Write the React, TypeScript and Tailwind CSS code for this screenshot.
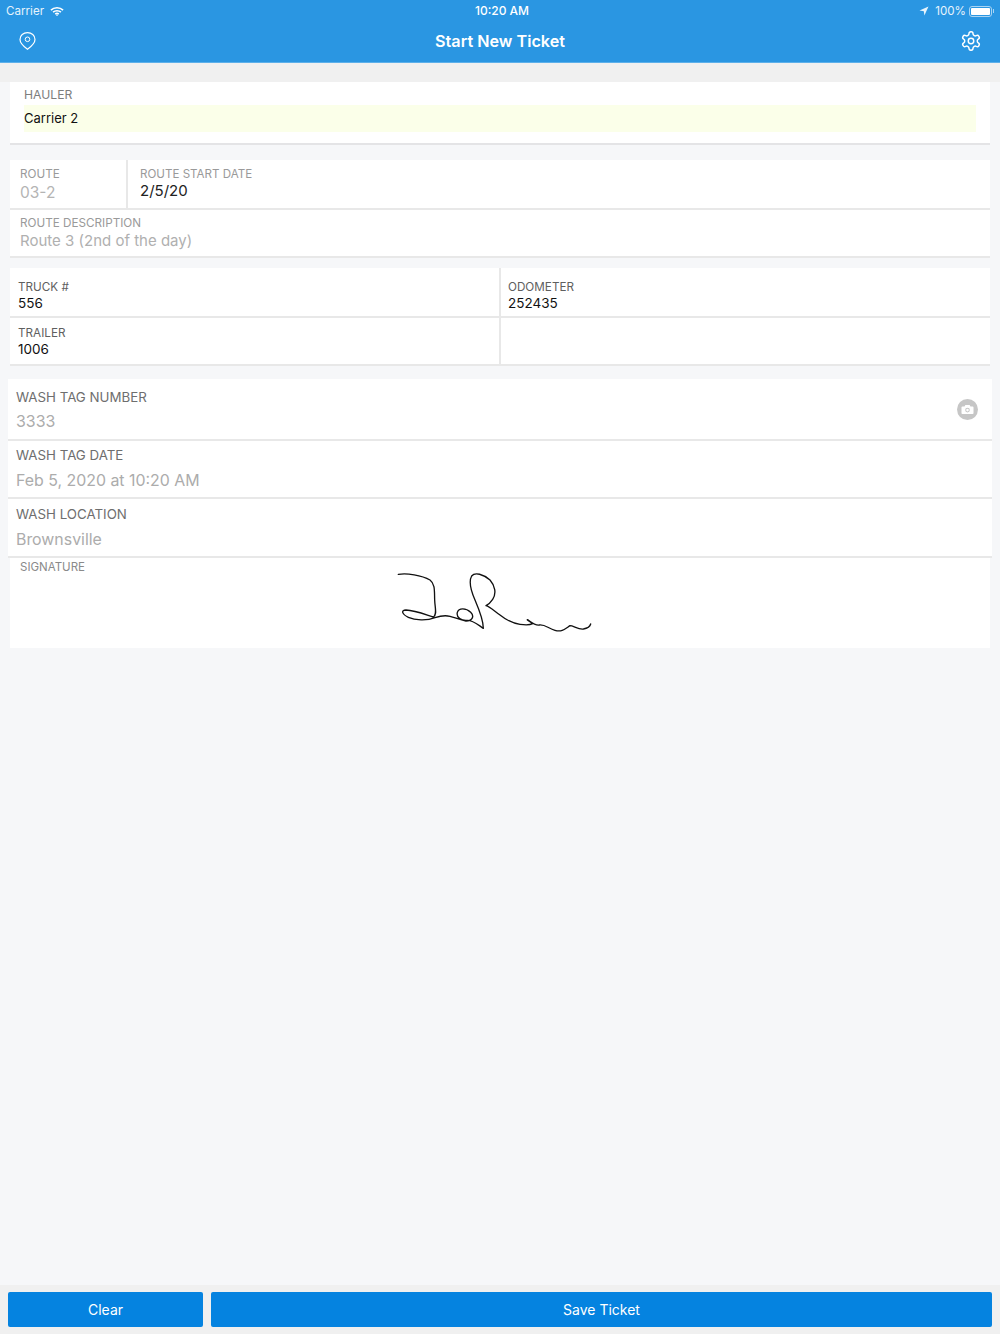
import React from "react";

const font = { fontFamily: "Inter, 'Liberation Sans', sans-serif" };

function Wifi() {
  return (
    <svg width="14" height="11" viewBox="0 0 15 11" fill="none" stroke="#fff" strokeWidth="1.7">
      <path d="M1 4 C4.5 .6 10.5 .6 14 4" />
      <path d="M3.3 6.2 C5.6 4.1 9.4 4.1 11.7 6.2" />
      <path d="M5.6 8.3 C6.7 7.4 8.3 7.4 9.4 8.3" />
      <circle cx="7.5" cy="9.6" r="0.8" fill="#fff" stroke="none" />
    </svg>
  );
}

function Signature() {
  return (
    <svg width="230" height="100" viewBox="0 0 690 300" fill="none" stroke="#111" strokeWidth="4" strokeLinecap="round" strokeLinejoin="round" className="absolute left-[370px] top-[-3px]">
      <path d="M55 58 C80 54 125 60 150 75 C166 87 163 110 164 135 C165 160 172 178 160 186 C140 180 105 166 78 165 C62 166 66 178 85 187 C105 196 140 198 165 188 C180 183 195 180 210 184 C225 188 240 194 258 198 C275 198 285 185 272 172 C258 158 236 158 232 172 C228 188 245 198 262 196 C280 196 292 208 310 220 C310 200 300 170 285 135 C272 105 265 80 275 63 C285 50 310 58 330 75 C345 92 350 115 338 133 C330 145 322 150 318 152 C330 155 345 170 360 180 C375 192 395 205 420 208 C435 210 450 210 458 206 C450 200 440 194 442 194 C450 198 462 212 478 210 C495 208 505 220 525 226 C545 232 555 222 570 212 C580 212 595 224 610 222 C622 220 630 215 632 207" />
    </svg>
  );
}

function Label({ children, className }: { children: React.ReactNode; className: string }) {
  return <div className={className}>{children}</div>;
}

function WashRow({ label, value, box, gap }: { label: string; value: string; box: string; gap: string }) {
  return (
    <div className={`bg-white border-b-2 border-[#e8e8e8] pl-2 ${box}`}>
      <div className="text-[13.3px] leading-[18px] text-[#6e6e6e]">{label}</div>
      <div className={`text-[15.9px] leading-[22px] text-[#acacac] ${gap}`}>{value}</div>
    </div>
  );
}

export default function App() {
  return (
    <div style={font} className="w-[1000px] h-[1334px] bg-[#f6f7f9] flex flex-col overflow-hidden">
      <header className="h-[63px] shrink-0 bg-[#2a96e2] border-b border-[#5db0ea] text-white flex flex-col">
        <div className="h-[21px] pt-[1px] flex items-center justify-between pl-[6px] pr-[6px] text-[11.6px]">
          <div className="flex items-center gap-[6px] w-[300px] pt-[1px]">
            <span className="text-[#e6f3fc]">Carrier</span>
            <Wifi />
          </div>
          <span className="text-[12px] font-medium pl-[4px]">10:20 AM</span>
          <div className="flex items-center justify-end gap-[5px] w-[300px] pt-[1px]">
            <svg width="10" height="10" viewBox="0 0 10 10" fill="#e6f3fc" className="mr-[1px]"><path d="M9.5 .5 L.5 4.6 L4.8 5.2 L5.4 9.5 Z" /></svg>
            <span className="text-[#e6f3fc] mr-[-2px]">100%</span>
            <div className="flex items-center gap-[1px]">
              <div className="w-[23px] h-[11px] rounded-[3px] border border-[#a9d4f3] p-[1px]">
                <div className="w-full h-full bg-white rounded-[1px]" />
              </div>
              <div className="w-[1px] h-[4px] bg-[#a9d4f3]" />
            </div>
          </div>
        </div>
        <div className="flex-1 flex items-center justify-between pl-[19px] pr-[18px] pb-[1px]">
          <svg width="17" height="18" viewBox="0 0 17 18" fill="none" stroke="#fff" strokeWidth="1.2" className="mr-[4px]">
            <path d="M8.5 17.2 C5 14.6 1 11.2 1 7.4 C1 3.4 4.4 .7 8.5 .7 C12.6 .7 16 3.4 16 7.4 C16 11.2 12 14.6 8.5 17.2 Z" />
            <circle cx="8.5" cy="7.3" r="2.3" strokeWidth="1" />
          </svg>
          <span className="text-[16.2px] font-semibold leading-none">Start New Ticket</span>
          <svg width="22" height="22" viewBox="0 0 24 24" fill="none" stroke="#fff" strokeWidth="1.6" strokeLinecap="round" strokeLinejoin="round">
            <path d="M12.22 2h-.44a2 2 0 0 0-2 2v.18a2 2 0 0 1-1 1.73l-.43.25a2 2 0 0 1-2 0l-.15-.08a2 2 0 0 0-2.73.73l-.22.38a2 2 0 0 0 .73 2.73l.15.1a2 2 0 0 1 1 1.72v.51a2 2 0 0 1-1 1.74l-.15.09a2 2 0 0 0-.73 2.73l.22.38a2 2 0 0 0 2.73.73l.15-.08a2 2 0 0 1 2 0l.43.25a2 2 0 0 1 1 1.73V20a2 2 0 0 0 2 2h.44a2 2 0 0 0 2-2v-.18a2 2 0 0 1 1-1.73l.43-.25a2 2 0 0 1 2 0l.15.08a2 2 0 0 0 2.73-.73l.22-.39a2 2 0 0 0-.73-2.73l-.15-.08a2 2 0 0 1-1-1.74v-.5a2 2 0 0 1 1-1.74l.15-.09a2 2 0 0 0 .73-2.73l-.22-.38a2 2 0 0 0-2.73-.73l-.15.08a2 2 0 0 1-2 0l-.43-.25a2 2 0 0 1-1-1.73V4a2 2 0 0 0-2-2z" />
            <circle cx="12" cy="12" r="3" />
          </svg>
        </div>
      </header>

      <div className="h-[19px] shrink-0 bg-[#f0f0f0]" />

      <main className="flex-1 flex flex-col">
        <section className="mx-[10px] h-[63px] bg-white border-b-2 border-[#e4e4e6] pt-[5px] pl-[14px] pr-[14px]">
          <Label className="text-[12.2px] leading-[15px] text-[#7d7d7d]">HAULER</Label>
          <div className="mt-[3px] h-[27px] bg-[#fbffe9] flex items-center text-[13px] text-[#111]">Carrier 2</div>
        </section>

        <section className="mx-[10px] mt-[15px] h-[98px] bg-white flex flex-col">
          <div className="h-[50px] flex border-b-2 border-[#e8e8e8]">
            <div className="w-[118px] border-r-2 border-[#e8e8e8] pl-[10px] pt-[7px]">
              <Label className="text-[11.7px] leading-[14px] text-[#9a9a9a]">ROUTE</Label>
              <div className="mt-[1px] text-[15.5px] leading-[22px] text-[#b4b4b4]">03-2</div>
            </div>
            <div className="flex-1 pl-[12px] pt-[7px]">
              <Label className="text-[11.6px] leading-[14px] text-[#9a9a9a]">ROUTE START DATE</Label>
              <div className="text-[15px] leading-[20px] text-[#222]">2/5/20</div>
            </div>
          </div>
          <div className="flex-1 border-b-2 border-[#e8e8e8] pl-[10px] pt-[6px]">
            <Label className="text-[11.7px] leading-[14px] text-[#9a9a9a]">ROUTE DESCRIPTION</Label>
            <div className="text-[15px] leading-[21px] text-[#b0b0b0]">Route 3 (2nd of the day)</div>
          </div>
        </section>

        <section className="mx-[10px] mt-[10px] h-[98px] bg-white grid grid-cols-2 grid-rows-[50px_48px]">
          {[
            ["TRUCK #", "556", "pt-[12px] pl-[8px]"],
            ["ODOMETER", "252435", "pt-[12px] pl-[7px] ml-[-1px] border-l-2"],
            ["TRAILER", "1006", "pt-[8px] pl-[8px]"],
            ["", "", "pt-[8px] pl-[7px] ml-[-1px] border-l-2"],
          ].map(([l, v, c], i) => (
            <div key={i} className={`border-b-2 border-[#e8e8e8] ${c}`}>
              <Label className="text-[11.7px] leading-[14px] text-[#5f5f5f]">{l}</Label>
              <div className="text-[13.5px] leading-[18px] text-[#111]">{v}</div>
            </div>
          ))}
        </section>

        <section className="mx-[8px] mt-[13px] flex flex-col">
          <div className="relative">
            <WashRow label="WASH TAG NUMBER" value="3333" box="h-[62px] pt-[9px]" gap="mt-[5px]" />
            <div className="absolute right-[14px] top-[20px] w-[21px] h-[21px] rounded-full bg-[#c6c6c6] flex items-center justify-center">
              <svg width="13" height="11" viewBox="0 0 13 11" fill="#fff">
                <path fillRule="evenodd" d="M4.4 1 L8.6 1 L9.5 2.4 L11.6 2.4 Q12.5 2.4 12.5 3.3 L12.5 9.2 Q12.5 10 11.6 10 L1.4 10 Q.5 10 .5 9.2 L.5 3.3 Q.5 2.4 1.4 2.4 L3.5 2.4 Z M6.5 3.8 A2.3 2.3 0 1 0 6.5 8.4 A2.3 2.3 0 1 0 6.5 3.8 Z M6.5 4.8 A1.3 1.3 0 1 1 6.5 7.4 A1.3 1.3 0 1 1 6.5 4.8 Z" />
              </svg>
            </div>
          </div>
          <WashRow label="WASH TAG DATE" value="Feb 5, 2020 at 10:20 AM" box="h-[58px] pt-[5px]" gap="mt-[6px]" />
          <WashRow label="WASH LOCATION" value="Brownsville" box="h-[59px] pt-[6px]" gap="mt-[6px]" />
          <div className="relative mx-[2px] h-[90px] bg-white pl-[10px] pt-[2px]">
            <Label className="text-[11.5px] leading-[14px] text-[#8a8a8a]">SIGNATURE</Label>
            <Signature />
          </div>
        </section>
      </main>

      <footer className="h-[49px] shrink-0 bg-[#f0f0f0] flex gap-[8px] pl-[8px] pr-[8px] pt-[7px]">
        <button className="w-[195px] h-[35px] bg-[#0583e0] rounded-[2px] text-white text-[14px]">Clear</button>
        <button className="flex-1 h-[35px] bg-[#0583e0] rounded-[2px] text-white text-[14px]">Save Ticket</button>
      </footer>
    </div>
  );
}
